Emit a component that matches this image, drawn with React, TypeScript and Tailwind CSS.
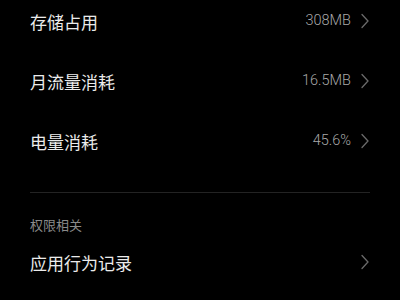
import React from "react";

const Chevron = () => (
  <svg width="8" height="16" viewBox="0 0 8 16" className="ml-[10px] shrink-0">
    <polyline points="1,1.5 7,8 1,14.5" fill="none" stroke="#6a6a6a" strokeWidth="1.3" strokeLinejoin="miter" strokeLinecap="round" />
  </svg>
);

const Row = ({ title, value }: { title: string; value?: string }) => (
  <div className="flex h-[60px] items-center justify-between pl-[30px] pr-[31px]">
    <span className="text-[17px] leading-none text-[#ebebeb]">{title}</span>
    <div className="flex items-center">
      {value && (
        <span className="text-[14.5px] font-light leading-none text-[#a8a8a8]" style={{ fontFamily: '"Roboto", "Noto Sans CJK SC", sans-serif' }}>
          {value}
        </span>
      )}
      <Chevron />
    </div>
  </div>
);

export default function App() {
  return (
    <div
      className="h-[300px] w-[400px] overflow-hidden bg-black"
      style={{ fontFamily: '"Noto Sans CJK SC", "Noto Sans", sans-serif' }}
    >
      <div className="-mt-[9px]">
        <Row title="存储占用" value="308MB" />
        <Row title="月流量消耗" value="16.5MB" />
        <Row title="电量消耗" value="45.6%" />
      </div>
      <div className="mx-[30px] mt-[21px] h-px bg-[#232323]" />
      <div className="mt-[23px] h-[16px] pl-[30px] text-[13px] leading-[18px] text-[#8a8a8a]">权限相关</div>
      <Row title="应用行为记录" />
    </div>
  );
}
